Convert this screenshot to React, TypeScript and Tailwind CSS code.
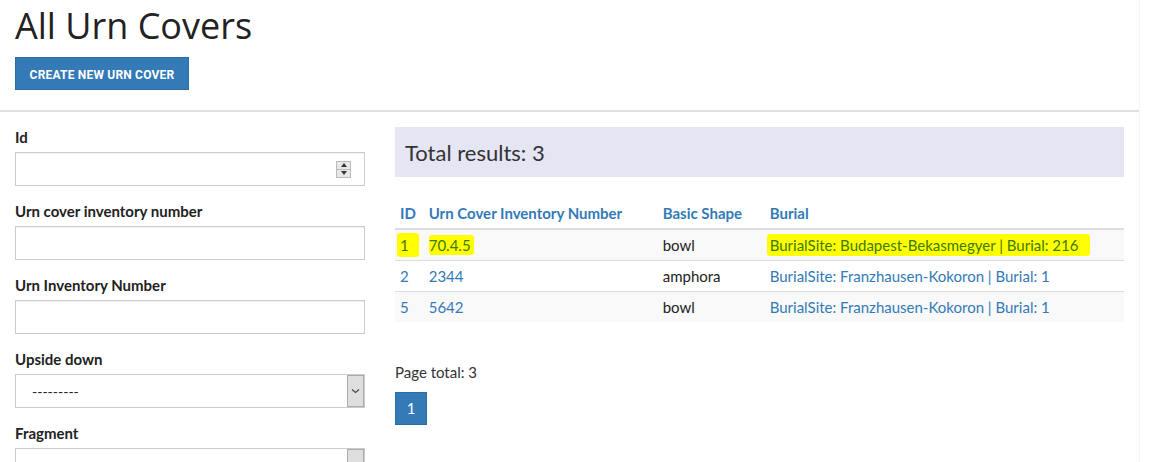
import React from "react";

const blue = "text-[#337ab7]";

type Row = {
  id: string;
  inv: string;
  shape: string;
  burial: string;
  marked?: boolean;
};

const rows: Row[] = [
  {
    id: "1",
    inv: "70.4.5",
    shape: "bowl",
    burial: "BurialSite: Budapest-Bekasmegyer | Burial: 216",
    marked: true,
  },
  {
    id: "2",
    inv: "2344",
    shape: "amphora",
    burial: "BurialSite: Franzhausen-Kokoron | Burial: 1",
  },
  {
    id: "5",
    inv: "5642",
    shape: "bowl",
    burial: "BurialSite: Franzhausen-Kokoron | Burial: 1",
  },
];

function Label({ children }: { children: React.ReactNode }) {
  return (
    <label className="mb-[5px] block h-5 text-[15px] font-bold leading-5 text-[#222]">
      {children}
    </label>
  );
}

function TextInput({ spinner }: { spinner?: boolean }) {
  return (
    <div className="flex h-[34px] items-center justify-end border border-[#ccc] bg-white pr-[13px] shadow-[inset_0_1px_1px_rgba(0,0,0,0.06)]">
      {spinner ? (
        <div className="flex h-[17px] w-[15px] flex-col border border-[#bbb] bg-[#e8e8e8]">
          <div className="flex flex-1 items-center justify-center border-b border-[#bbb]">
            <div className="h-0 w-0 border-x-[3px] border-b-[4px] border-x-transparent border-b-[#333]" />
          </div>
          <div className="flex flex-1 items-center justify-center">
            <div className="h-0 w-0 border-x-[3px] border-t-[4px] border-x-transparent border-t-[#333]" />
          </div>
        </div>
      ) : null}
    </div>
  );
}

function SelectBox({ value }: { value?: string }) {
  return (
    <div className="flex h-[34px] items-stretch border border-[#ccc] bg-white">
      <div className="flex flex-1 items-center pl-[16px] text-[14px] text-[#222]">
        {value}
      </div>
      <div className="flex w-[17px] items-center justify-center border border-[#aaa] bg-[#dedede]">
        <svg width="9" height="6" viewBox="0 0 9 6" fill="none">
          <path d="M1 1.5 4.5 4.5 8 1.5" stroke="#444" strokeWidth="1.1" />
        </svg>
      </div>
    </div>
  );
}

function Mark({ children, className }: { children: React.ReactNode; className?: string }) {
  return (
    <span
      className={`rounded-[3px] bg-[#ffff00] text-[#3d7a06] ${className ?? ""}`}
    >
      {children}
    </span>
  );
}

export default function App() {
  return (
    <div className="h-[462px] w-[1162px] overflow-hidden bg-white font-['Lato','Liberation_Sans',sans-serif] text-[15px] text-[#222]">
      <div className="w-[1140px] border-r border-[#f4f4f4]">
        <div className="px-[15px] pt-[4px]">
          <h1 className="font-['Open_Sans','Liberation_Sans',sans-serif] text-[36px] leading-[44px] text-[#222]">
            All Urn Covers
          </h1>
          <button
            className="mt-[9px] h-[33px] w-[174px] border border-[#2e6da4] bg-[#337ab7] pt-[3px] font-['Roboto','Liberation_Sans',sans-serif] text-[12px] font-bold uppercase tracking-[0.2px] text-white"
            type="button"
          >
            Create new urn cover
          </button>
        </div>
        <hr className="mt-[20px] border-t-2 border-[#e0e0e0]" />

        <div className="flex gap-[30px] px-[15px] pt-[15px]">
          <form className="flex w-[350px] flex-col gap-[15px]">
            <div>
              <Label>Id</Label>
              <TextInput spinner />
            </div>
            <div>
              <Label>Urn cover inventory number</Label>
              <TextInput />
            </div>
            <div>
              <Label>Urn Inventory Number</Label>
              <TextInput />
            </div>
            <div>
              <Label>Upside down</Label>
              <SelectBox value="---------" />
            </div>
            <div>
              <Label>Fragment</Label>
              <SelectBox />
            </div>
          </form>

          <div className="flex-1">
            <div className="flex h-[50px] items-center bg-[#e5e5f4] px-[10px] text-[22px] text-[#333]">
              Total results: 3
            </div>

            <table className="mt-[21px] w-full border-collapse text-left">
              <thead>
                <tr className="border-b-2 border-[#ddd]">
                  <th className={`w-[28px] p-[5px] font-bold leading-5 ${blue}`}>ID</th>
                  <th className={`w-[234px] p-[5px] font-bold leading-5 ${blue}`}>
                    Urn Cover Inventory Number
                  </th>
                  <th className={`w-[107px] p-[5px] font-bold leading-5 ${blue}`}>
                    Basic Shape
                  </th>
                  <th className={`p-[5px] font-bold leading-5 ${blue}`}>Burial</th>
                </tr>
              </thead>
              <tbody>
                {rows.map((row, i) => (
                  <tr
                    className={`border-t border-[#ddd] ${i % 2 === 0 ? "bg-[#f9f9f9]" : "bg-white"}`}
                    key={row.id}
                  >
                    <td className={`p-[5px] leading-5 ${blue}`}>
                      {row.marked ? (
                        <Mark className="-ml-[3px] py-[3px] pl-[3px] pr-[10px]">{row.id}</Mark>
                      ) : (
                        row.id
                      )}
                    </td>
                    <td className={`p-[5px] leading-5 ${blue}`}>
                      {row.marked ? <Mark className="py-[1px] pr-[3px]">{row.inv}</Mark> : row.inv}
                    </td>
                    <td className="p-[5px] leading-5 text-[#222]">{row.shape}</td>
                    <td className={`p-[5px] leading-5 ${blue}`}>
                      {row.marked ? (
                        <Mark className="-ml-[3px] py-[2px] pl-[3px] pr-[12px]">{row.burial}</Mark>
                      ) : (
                        row.burial
                      )}
                    </td>
                  </tr>
                ))}
              </tbody>
            </table>

            <p className="mt-[40px] leading-5 text-[#333]">Page total: 3</p>
            <div className="mt-[10px] flex">
              <span className="flex h-[33px] w-[32px] items-center justify-center border border-[#2e6da4] bg-[#337ab7] text-[15px] text-white">
                1
              </span>
            </div>
          </div>
        </div>
      </div>
    </div>
  );
}
